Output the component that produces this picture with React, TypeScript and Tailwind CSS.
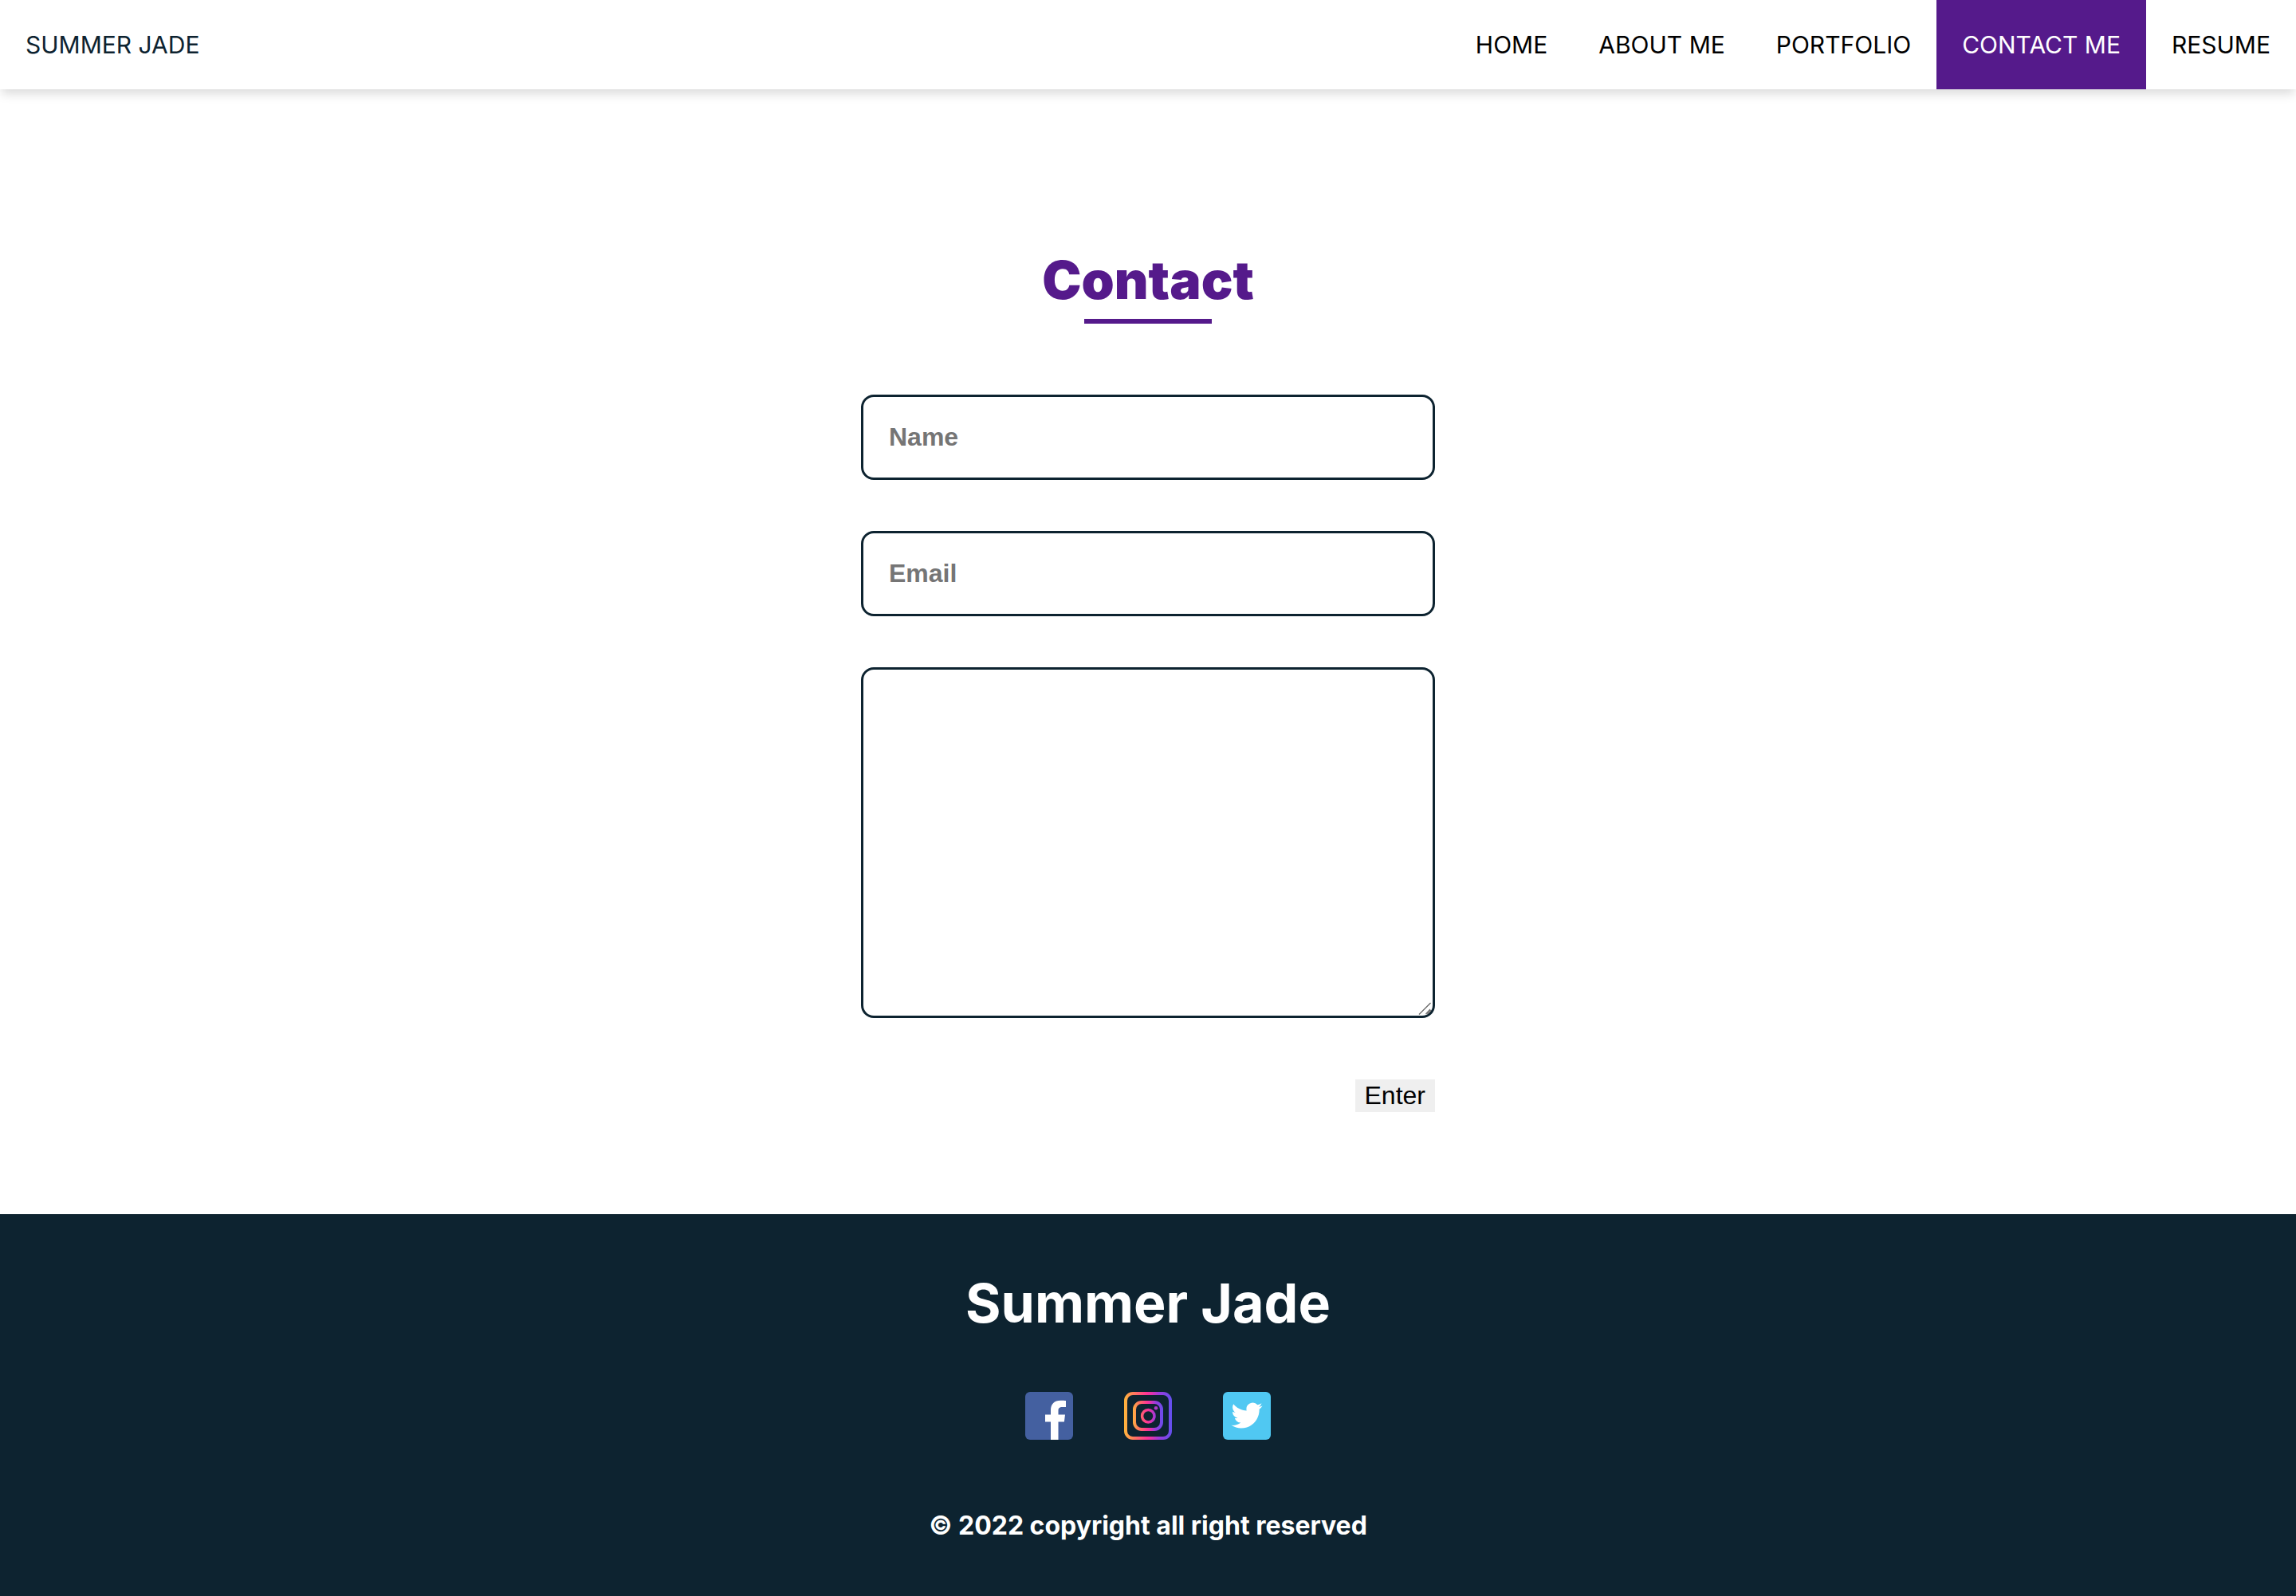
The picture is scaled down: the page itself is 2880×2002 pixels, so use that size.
const links = [
  { label: 'HOME', href: '#home' },
  { label: 'ABOUT ME', href: '#about' },
  { label: 'PORTFOLIO', href: '#portfolio' },
  { label: 'CONTACT ME', href: '#contact', active: true },
  { label: 'RESUME', href: '#resume' },
];

const fieldClass =
  'block w-full rounded-2xl border-3 border-[#0d2330] bg-white px-8 font-["Liberation_Sans",sans-serif] text-[32px] font-bold text-[#0d2330] placeholder:text-[#757575] placeholder:opacity-100';

function FacebookIcon() {
  return (
    <svg viewBox="0 0 60 60" className="size-[60px]" aria-hidden="true">
      <rect width="60" height="60" rx="6" fill="#4460a0" />
      <path
        fill="#fff"
        d="M32 60V37.500h-7v-9h7V23c0-8 4.500-12.300 12.300-12.300 3 0 5.500.2 6.700.4v8h-4.600c-3.600 0-4.900 1.700-4.900 4.300v5.100h8.500l-1.100 9h-7.400V60z"
      />
    </svg>
  );
}

function GradientStops() {
  return (
    <>
      <stop offset="0" stopColor="#ffb43a" />
      <stop offset="0.04" stopColor="#ffad42" />
      <stop offset="0.2" stopColor="#ff7a5c" />
      <stop offset="0.47" stopColor="#ff3593" />
      <stop offset="0.58" stopColor="#e033ad" />
      <stop offset="0.73" stopColor="#9b3bdd" />
      <stop offset="1" stopColor="#6250ee" />
    </>
  );
}

function InstagramIcon() {
  return (
    <svg viewBox="0 0 60 60" className="size-[60px]" aria-hidden="true">
      <defs>
        <linearGradient id="ig-outer" gradientUnits="userSpaceOnUse" x1="0" y1="30" x2="60" y2="30">
          <GradientStops />
        </linearGradient>
        <linearGradient id="ig-inner" gradientUnits="userSpaceOnUse" x1="10" y1="30" x2="50" y2="30">
          <GradientStops />
        </linearGradient>
      </defs>
      <g fill="none" strokeWidth="4">
        <rect x="2" y="2" width="56" height="56" rx="9" stroke="url(#ig-outer)" />
        <rect x="13" y="13" width="34" height="34" rx="9" stroke="url(#ig-inner)" />
        <circle cx="30.300" cy="30.200" r="7.700" strokeWidth="3.500" stroke="url(#ig-inner)" />
      </g>
      <circle cx="40" cy="20.300" r="2.300" fill="#b03acb" />
    </svg>
  );
}

function TwitterIcon() {
  return (
    <svg viewBox="0 0 60 60" className="size-[60px]" aria-hidden="true">
      <rect width="60" height="60" rx="6" fill="#50c8f2" />
      <g transform="translate(10.500 10) scale(1.630)">
        <path
          fill="#fff"
          d="M23.953 4.570a10 10 0 0 1-2.825.775 4.958 4.958 0 0 0 2.163-2.723c-.951.555-2.005.959-3.127 1.184a4.920 4.920 0 0 0-8.384 4.482C7.690 8.095 4.067 6.130 1.640 3.162a4.822 4.822 0 0 0-.666 2.475c0 1.710.87 3.213 2.188 4.096a4.904 4.904 0 0 1-2.228-.616v.06a4.923 4.923 0 0 0 3.946 4.827 4.996 4.996 0 0 1-2.212.085 4.936 4.936 0 0 0 4.604 3.417 9.867 9.867 0 0 1-6.102 2.105c-.39 0-.779-.023-1.170-.067a13.995 13.995 0 0 0 7.557 2.209c9.053 0 13.998-7.496 13.998-13.985 0-.21 0-.42-.015-.63A9.935 9.935 0 0 0 24 4.590z"
        />
      </g>
    </svg>
  );
}

export default function App() {
  return (
    <div className='flex min-h-screen flex-col bg-white font-["Inter",sans-serif] text-black'>
      <header className="relative flex h-28 items-center justify-between bg-white shadow-[0_8px_12px_-2px_rgba(0,0,0,0.14)]">
        <a href="#home" className="px-8 text-[30px] text-[#0d2330]">
          SUMMER JADE
        </a>
        <nav className="flex h-full">
          {links.map((l) => (
            <a
              key={l.label}
              href={l.href}
              className={
                l.active
                  ? 'flex items-center bg-[#551a8b] px-8 text-[30px] text-white'
                  : 'flex items-center px-8 text-[30px]'
              }
            >
              {l.label}
            </a>
          ))}
        </nav>
      </header>

      <main className="flex flex-1 flex-col items-center pt-[199px] pb-32">
        <h1 className="text-[66px] leading-[80px] font-black text-[#551a8b]">Contact</h1>
        <div className="mt-[9px] h-1.5 w-40 bg-[#551a8b]" />
        <form className="mt-[89px] flex w-1/4 flex-col gap-16" onSubmit={(e) => e.preventDefault()}>
          <input aria-label="Name" placeholder="Name" className={fieldClass + ' h-[107px]'} />
          <input aria-label="Email" type="email" placeholder="Email" className={fieldClass + ' h-[107px]'} />
          <div className="relative">
            <textarea aria-label="Message" className={fieldClass + ' h-[440px] resize-none py-8'} />
            <svg
              viewBox="0 0 18 18"
              className="pointer-events-none absolute right-[3px] bottom-[3px] size-[18px]"
              aria-hidden="true"
            >
              <path
                d="M1 16.500L15.500 2M9.500 16L14.500 10.500L15.500 12L11.500 16"
                stroke="#666"
                strokeWidth="1.300"
                fill="none"
              />
            </svg>
          </div>
          <button
            type="submit"
            className='mt-[13px] self-end bg-[#efefef] px-3 font-["Liberation_Sans",sans-serif] text-[32px] leading-[41px]'
          >
            Enter
          </button>
        </form>
      </main>

      <footer className="flex flex-col items-center bg-[#0d2330] pt-[71px] pb-16 text-white">
        <h2 className="text-[68px] leading-[80px] font-bold">Summer Jade</h2>
        <div className="mt-[72px] flex gap-16">
          <a href="#facebook" aria-label="Facebook">
            <FacebookIcon />
          </a>
          <a href="#instagram" aria-label="Instagram">
            <InstagramIcon />
          </a>
          <a href="#twitter" aria-label="Twitter">
            <TwitterIcon />
          </a>
        </div>
        <p className="mt-[84px] text-[32px] leading-[48px] font-bold">© 2022 copyright all right reserved</p>
      </footer>
    </div>
  );
}
